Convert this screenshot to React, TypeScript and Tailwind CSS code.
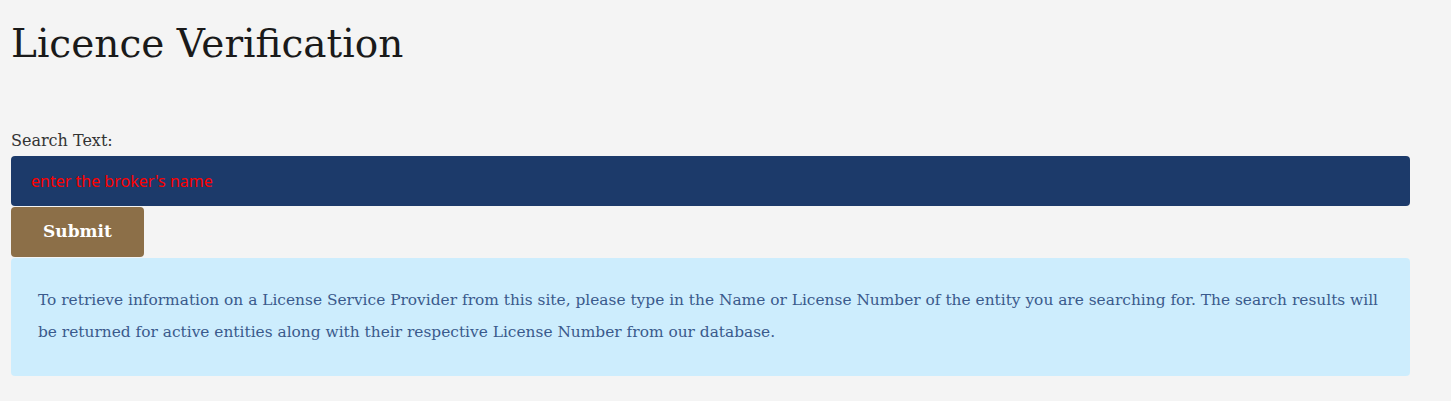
import React from 'react';

const serif = "font-['DejaVu_Serif',Georgia,serif]";

const App = () => {
  return (
    <div className={`min-h-[401px] bg-[#f4f4f4] pl-[11px] pt-[16px] pr-[41px] ${serif}`}>
      {/* Title */}
      <h1 className="text-[39px] leading-[56px] text-[#1a1a1a] font-normal">Licence Verification</h1>

      {/* Search form */}
      <form className="mt-[58px] flex flex-col" onSubmit={(e) => e.preventDefault()}>
        <label htmlFor="search" className="mb-[4px] text-[16px] leading-[22px] text-[#333]">
          Search Text:
        </label>
        <input
          id="search"
          type="text"
          placeholder="enter the broker's name"
          className="h-[50px] w-full rounded-[4px] bg-[#1c3a6a] px-[20px] font-['Noto_Sans',sans-serif] text-[16px] text-white placeholder:text-[#ff0000] outline-none"
        />
        <button
          type="submit"
          className="mt-[1px] h-[50px] w-[133px] rounded-[4px] bg-[#8c6f48] text-[17px] font-bold text-white"
        >
          Submit
        </button>
      </form>

      {/* Info box */}
      <div className="mt-[1px] rounded-[4px] bg-[#cdedfd] pl-[27px] pr-[14px] pt-[26px] pb-[28px]">
        <p className="text-[15.4px] leading-[32px] text-[#3a5a8c]">
          To retrieve information on a License Service Provider from this site, please type in the Name or License Number of
          the entity you are searching for. The search results will be returned for active entities along with their
          respective License Number from our database.
        </p>
      </div>
    </div>
  );
};

export default App;
